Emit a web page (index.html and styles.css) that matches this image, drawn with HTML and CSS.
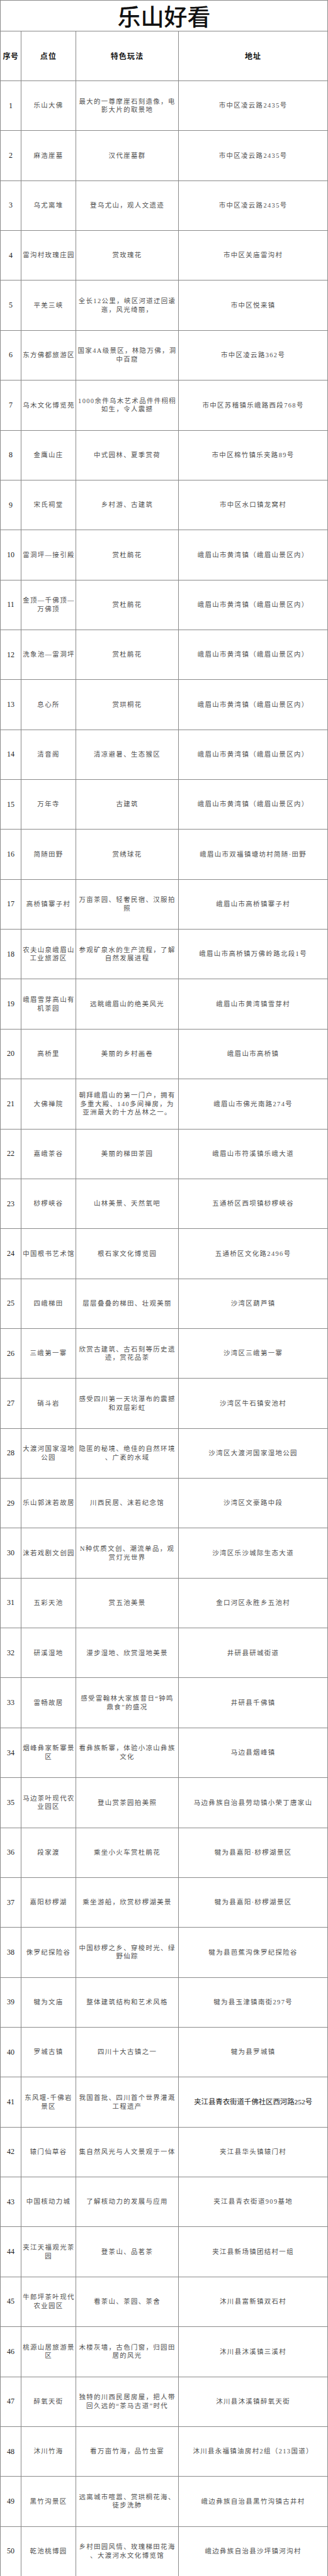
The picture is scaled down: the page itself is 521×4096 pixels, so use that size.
FILE: index.html
```html
<!DOCTYPE html>
<html lang="zh-CN">
<head>
<meta charset="utf-8">
<title>乐山好看</title>
<link rel="stylesheet" href="styles.css">
</head>
<body>
<table class="sheet">
<colgroup>
<col class="c-no"><col class="c-name"><col class="c-feat"><col class="c-addr">
</colgroup>
<thead>
<tr class="title-row"><th colspan="4" class="title">乐山好看</th></tr>
<tr class="head-row"><th class="hd hd-no">序号</th><th class="hd">点位</th><th class="hd">特色玩法</th><th class="hd">地址</th></tr>
</thead>
<tbody>
<tr><td class="no">1</td><td class="txt">乐山大佛</td><td class="txt">最大的一尊摩崖石刻造像，电<br>影大片的取景地</td><td class="txt">市中区凌云路2435号</td></tr>
<tr><td class="no">2</td><td class="txt">麻浩崖墓</td><td class="txt">汉代崖墓群</td><td class="txt">市中区凌云路2435号</td></tr>
<tr><td class="no">3</td><td class="txt">乌尤离堆</td><td class="txt">登乌尤山，观人文遗迹</td><td class="txt">市中区凌云路2435号</td></tr>
<tr><td class="no">4</td><td class="txt">雷沟村玫瑰庄园</td><td class="txt">赏玫瑰花</td><td class="txt">市中区关庙雷沟村</td></tr>
<tr><td class="no">5</td><td class="txt">平羌三峡</td><td class="txt">全长12公里，峡区河道迂回逶<br>迤，风光绮丽，</td><td class="txt">市中区悦来镇</td></tr>
<tr><td class="no">6</td><td class="txt">东方佛都旅游区</td><td class="txt">国家4A级景区，林隐万佛，洞<br>中百窟</td><td class="txt">市中区凌云路362号</td></tr>
<tr><td class="no">7</td><td class="txt">乌木文化博览苑</td><td class="txt">1000余件乌木艺术品件件栩栩<br>如生，令人震撼</td><td class="txt">市中区苏稽镇乐峨路西段768号</td></tr>
<tr><td class="no">8</td><td class="txt">金鹰山庄</td><td class="txt">中式园林、夏季赏荷</td><td class="txt">市中区棉竹镇乐夹路89号</td></tr>
<tr><td class="no">9</td><td class="txt">宋氏祠堂</td><td class="txt">乡村游、古建筑</td><td class="txt">市中区水口镇龙窝村</td></tr>
<tr><td class="no">10</td><td class="txt">雷洞坪—接引殿</td><td class="txt">赏杜鹃花</td><td class="txt">峨眉山市黄湾镇（峨眉山景区内）</td></tr>
<tr><td class="no">11</td><td class="txt">金顶—千佛顶—<br>万佛顶</td><td class="txt">赏杜鹃花</td><td class="txt">峨眉山市黄湾镇（峨眉山景区内）</td></tr>
<tr><td class="no">12</td><td class="txt">洗象池—雷洞坪</td><td class="txt">赏杜鹃花</td><td class="txt">峨眉山市黄湾镇（峨眉山景区内）</td></tr>
<tr><td class="no">13</td><td class="txt">息心所</td><td class="txt">赏珙桐花</td><td class="txt">峨眉山市黄湾镇（峨眉山景区内）</td></tr>
<tr><td class="no">14</td><td class="txt">清音阁</td><td class="txt">清凉避暑、生态猴区</td><td class="txt">峨眉山市黄湾镇（峨眉山景区内）</td></tr>
<tr><td class="no">15</td><td class="txt">万年寺</td><td class="txt">古建筑</td><td class="txt">峨眉山市黄湾镇（峨眉山景区内）</td></tr>
<tr><td class="no">16</td><td class="txt">简随田野</td><td class="txt">赏绣球花</td><td class="txt">峨眉山市双福镇塘坊村简随·田野</td></tr>
<tr><td class="no">17</td><td class="txt">高桥镇寨子村</td><td class="txt">万亩茶园、轻奢民宿、汉服拍<br>照</td><td class="txt">峨眉山市高桥镇寨子村</td></tr>
<tr><td class="no">18</td><td class="txt">农夫山泉峨眉山<br>工业旅游区</td><td class="txt">参观矿泉水的生产流程，了解<br>自然发展进程</td><td class="txt">峨眉山市高桥镇万佛岭路北段1号</td></tr>
<tr><td class="no">19</td><td class="txt">峨眉雪芽高山有<br>机茶园</td><td class="txt">远眺峨眉山的绝美风光</td><td class="txt">峨眉山市黄湾镇雪芽村</td></tr>
<tr><td class="no">20</td><td class="txt">高桥里</td><td class="txt">美丽的乡村画卷</td><td class="txt">峨眉山市高桥镇</td></tr>
<tr><td class="no">21</td><td class="txt">大佛禅院</td><td class="txt">朝拜峨眉山的第一门户，拥有<br>多重大殿、140多间禅房，为<br>亚洲最大的十方丛林之一。</td><td class="txt">峨眉山市佛光南路274号</td></tr>
<tr><td class="no">22</td><td class="txt">嘉峨茶谷</td><td class="txt">美丽的梯田茶园</td><td class="txt">峨眉山市符溪镇乐峨大道</td></tr>
<tr><td class="no">23</td><td class="txt">桫椤峡谷</td><td class="txt">山林美景、天然氧吧</td><td class="txt">五通桥区西坝镇桫椤峡谷</td></tr>
<tr><td class="no">24</td><td class="txt">中国根书艺术馆</td><td class="txt">根石家文化博览园</td><td class="txt">五通桥区文化路2496号</td></tr>
<tr><td class="no">25</td><td class="txt">四峨梯田</td><td class="txt">层层叠叠的梯田、壮观美丽</td><td class="txt">沙湾区葫芦镇</td></tr>
<tr><td class="no">26</td><td class="txt">三峨第一寨</td><td class="txt">欣赏古建筑、古石刻等历史遗<br>迹，赏花品茶</td><td class="txt">沙湾区三峨第一寨</td></tr>
<tr><td class="no">27</td><td class="txt">硝斗岩</td><td class="txt">感受四川第一天坑瀑布的震撼<br>和双层彩虹</td><td class="txt">沙湾区牛石镇安池村</td></tr>
<tr><td class="no">28</td><td class="txt">大渡河国家湿地<br>公园</td><td class="txt">隐匿的秘境、绝佳的自然环境<br>、广袤的水域</td><td class="txt">沙湾区大渡河国家湿地公园</td></tr>
<tr><td class="no">29</td><td class="txt">乐山郭沫若故居</td><td class="txt">川西民居、沫若纪念馆</td><td class="txt">沙湾区文豪路中段</td></tr>
<tr><td class="no">30</td><td class="txt">沫若戏剧文创园</td><td class="txt">N种优质文创、潮流单品，观<br>赏灯光世界</td><td class="txt">沙湾区乐沙城际生态大道</td></tr>
<tr><td class="no">31</td><td class="txt">五彩天池</td><td class="txt">赏五池美景</td><td class="txt">金口河区永胜乡五池村</td></tr>
<tr><td class="no">32</td><td class="txt">研溪湿地</td><td class="txt">漫步湿地、欣赏湿地美景</td><td class="txt">井研县研城街道</td></tr>
<tr><td class="no">33</td><td class="txt">雷畅故居</td><td class="txt">感受雷翰林大家族昔日“钟鸣<br>鼎食”的盛况</td><td class="txt">井研县千佛镇</td></tr>
<tr><td class="no">34</td><td class="txt">烟峰彝家新寨景<br>区</td><td class="txt">看彝族新寨，体验小凉山彝族<br>文化</td><td class="txt">马边县烟峰镇</td></tr>
<tr><td class="no">35</td><td class="txt">马边茶叶现代农<br>业园区</td><td class="txt">登山赏茶园拍美照</td><td class="txt">马边彝族自治县劳动镇小荣丁唐家山</td></tr>
<tr><td class="no">36</td><td class="txt">段家渡</td><td class="txt">乘坐小火车赏杜鹃花</td><td class="txt">犍为县嘉阳·桫椤湖景区</td></tr>
<tr><td class="no">37</td><td class="txt">嘉阳桫椤湖</td><td class="txt">乘坐游船，欣赏桫椤湖美景</td><td class="txt">犍为县嘉阳·桫椤湖景区</td></tr>
<tr><td class="no">38</td><td class="txt">侏罗纪探险谷</td><td class="txt">中国桫椤之乡、穿梭时光、绿<br>野仙踪</td><td class="txt">犍为县芭蕉沟侏罗纪探险谷</td></tr>
<tr><td class="no">39</td><td class="txt">犍为文庙</td><td class="txt">整体建筑结构和艺术风格</td><td class="txt">犍为县玉津镇南街297号</td></tr>
<tr><td class="no">40</td><td class="txt">罗城古镇</td><td class="txt">四川十大古镇之一</td><td class="txt">犍为县罗城镇</td></tr>
<tr><td class="no">41</td><td class="txt">东风堰-千佛岩<br>景区</td><td class="txt">我国首批、四川首个世界灌溉<br>工程遗产</td><td class="txt txt-dark">夹江县青衣街道千佛社区西河路252号</td></tr>
<tr><td class="no">42</td><td class="txt">辕门仙草谷</td><td class="txt">集自然风光与人文景观于一体</td><td class="txt">夹江县华头镇辕门村</td></tr>
<tr><td class="no">43</td><td class="txt">中国核动力城</td><td class="txt">了解核动力的发展与应用</td><td class="txt">夹江县青衣街道909基地</td></tr>
<tr><td class="no">44</td><td class="txt">夹江天福观光茶<br>园</td><td class="txt">登茶山、品茗茶</td><td class="txt">夹江县新场镇团结村一组</td></tr>
<tr><td class="no">45</td><td class="txt">牛郎坪茶叶现代<br>农业园区</td><td class="txt">看茶山、茶园、茶舍</td><td class="txt">沐川县富新镇双石村</td></tr>
<tr><td class="no">46</td><td class="txt">桃源山居旅游景<br>区</td><td class="txt">木楼灰墙，古色门窗，归园田<br>居的风光</td><td class="txt">沐川县沐溪镇三溪村</td></tr>
<tr><td class="no">47</td><td class="txt">醉氧天街</td><td class="txt">独特的川西民居房屋，把人带<br>回久远的“茶马古道”时代</td><td class="txt">沐川县沐溪镇醉氧天街</td></tr>
<tr><td class="no">48</td><td class="txt">沐川竹海</td><td class="txt">看万亩竹海，品竹虫宴</td><td class="txt">沐川县永福镇油房村2组（213国道）</td></tr>
<tr><td class="no">49</td><td class="txt">黑竹沟景区</td><td class="txt">远离城市喧嚣、赏珙桐花海、<br>徒步洗肺</td><td class="txt">峨边彝族自治县黑竹沟镇古井村</td></tr>
<tr><td class="no">50</td><td class="txt">乾池桃博园</td><td class="txt">乡村田园风情、玫瑰梯田花海<br>、大渡河水文化博览馆</td><td class="txt">峨边彝族自治县沙坪镇河沟村</td></tr>
</tbody>
</table>
</body>
</html>
```

FILE: styles.css
```css
html, body {
  margin: 0;
  padding: 0;
  background: #ffffff;
}

.sheet {
  width: 520px;
  table-layout: fixed;
  border-collapse: collapse;
  font-family: "Liberation Serif", "Noto Sans CJK SC", serif;
}

.c-no { width: 33.2px; }
.c-name { width: 86.7px; }
.c-feat { width: 163.4px; }
.c-addr { width: 236.7px; }

.sheet th,
.sheet td {
  border: 1px solid #8a8a8a;
  padding: 0 2px;
  text-align: center;
  vertical-align: middle;
  white-space: nowrap;
  overflow: visible;
}

.title-row th { height: 47.6px; }

.title {
  font-family: "Noto Sans CJK SC", sans-serif;
  font-size: 37px;
  font-weight: 500;
  color: #111;
  line-height: 40px;
  padding-top: 4px;
  border-top-color: #c8c8c8;
}

.head-row th { height: 78.4px; }

.hd {
  font-family: "Noto Sans CJK SC", sans-serif;
  font-size: 12px;
  font-weight: 700;
  letter-spacing: 1.2px;
  color: #141414;
}

.hd-no {
  padding: 0;
  letter-spacing: 0.6px;
}

.sheet tbody td { height: 78.36px; }

.no {
  font-family: "Liberation Serif", serif;
  font-size: 12px;
  color: #222;
  padding: 0;
}

.txt {
  font-size: 10.4px;
  line-height: 13.6px;
  letter-spacing: 1.4px;
  color: #505050;
}

.txt-dark {
  letter-spacing: 0;
  font-size: 11.4px;
  color: #1c1c1c;
}
```
